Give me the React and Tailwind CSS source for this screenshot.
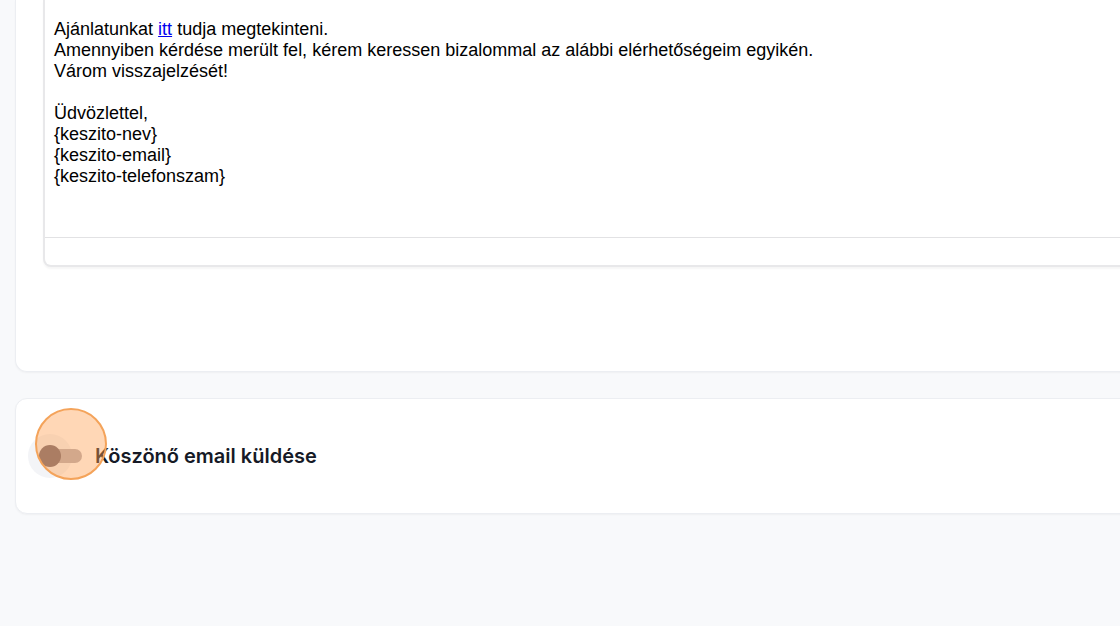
import React from "react";

const EmailEditor = () => {
  return (
    <div className="w-[1200px] bg-white rounded-b-xl border border-t-0 border-[#eceef2] shadow-[0_1px_2px_rgba(0,0,0,0.04)] px-[27px] pb-[104px]">
      <div className="rounded-b-lg border-2 border-t-0 border-[#e8e8ea] shadow-[0_2px_2px_rgba(0,0,0,0.04)] bg-white">
        {/* editor content */}
        <div
          className="pt-[19px] pl-[9px] pb-[50px] text-[18px] leading-[21px] text-black"
          style={{ fontFamily: '"Liberation Sans", Arial, sans-serif' }}
        >
          <p>
            Ajánlatunkat{" "}
            <a href="#" className="text-[#0000ee] underline">
              itt
            </a>{" "}
            tudja megtekinteni.
          </p>
          <p>
            Amennyiben kérdése merült fel, kérem keressen bizalommal az alábbi
            elérhetőségeim egyikén.
          </p>
          <p>Várom visszajelzését!</p>
          <p>&nbsp;</p>
          <p>Üdvözlettel,</p>
          <p>{"{keszito-nev}"}</p>
          <p>{"{keszito-email}"}</p>
          <p>{"{keszito-telefonszam}"}</p>
        </div>
        {/* footer bar */}
        <div className="border-t border-[#e2e2e4] h-[28px]"></div>
      </div>
    </div>
  );
};

const ThanksToggle = () => {
  return (
    <div className="w-[1200px] h-[116px] bg-white rounded-xl border border-[#eceef2] shadow-[0_1px_2px_rgba(0,0,0,0.04)] flex items-center pl-[12px]">
      <div className="relative w-[58px] h-[44px] flex-none">
        {/* hover halo */}
        <div className="absolute left-0 top-0 w-[44px] h-[44px] rounded-full bg-[#f3f4f7]" />
        {/* track */}
        <div className="absolute left-[12px] top-[15px] w-[42px] h-[14px] rounded-full bg-[#b3aeb6]" />
        {/* thumb */}
        <div className="absolute left-[11px] top-[11px] w-[22px] h-[22px] rounded-full bg-[#6e6470]" />
        {/* click highlight */}
        <div className="absolute left-[7px] top-[-26px] w-[72px] h-[72px] rounded-full border-2 border-[#f4a35a] bg-[rgba(255,160,80,0.42)] z-10" />
      </div>
      <span
        className="ml-[9px] text-[20px] font-semibold text-[#161a26]"
        style={{ fontFamily: "Inter, sans-serif" }}
      >
        Köszönő email küldése
      </span>
    </div>
  );
};

export default function App() {
  return (
    <div className="w-[1120px] h-[626px] overflow-hidden bg-[#f8f9fb]">
      <div className="pl-[15px] flex flex-col gap-[26px]">
        <EmailEditor />
        <ThanksToggle />
      </div>
    </div>
  );
}
